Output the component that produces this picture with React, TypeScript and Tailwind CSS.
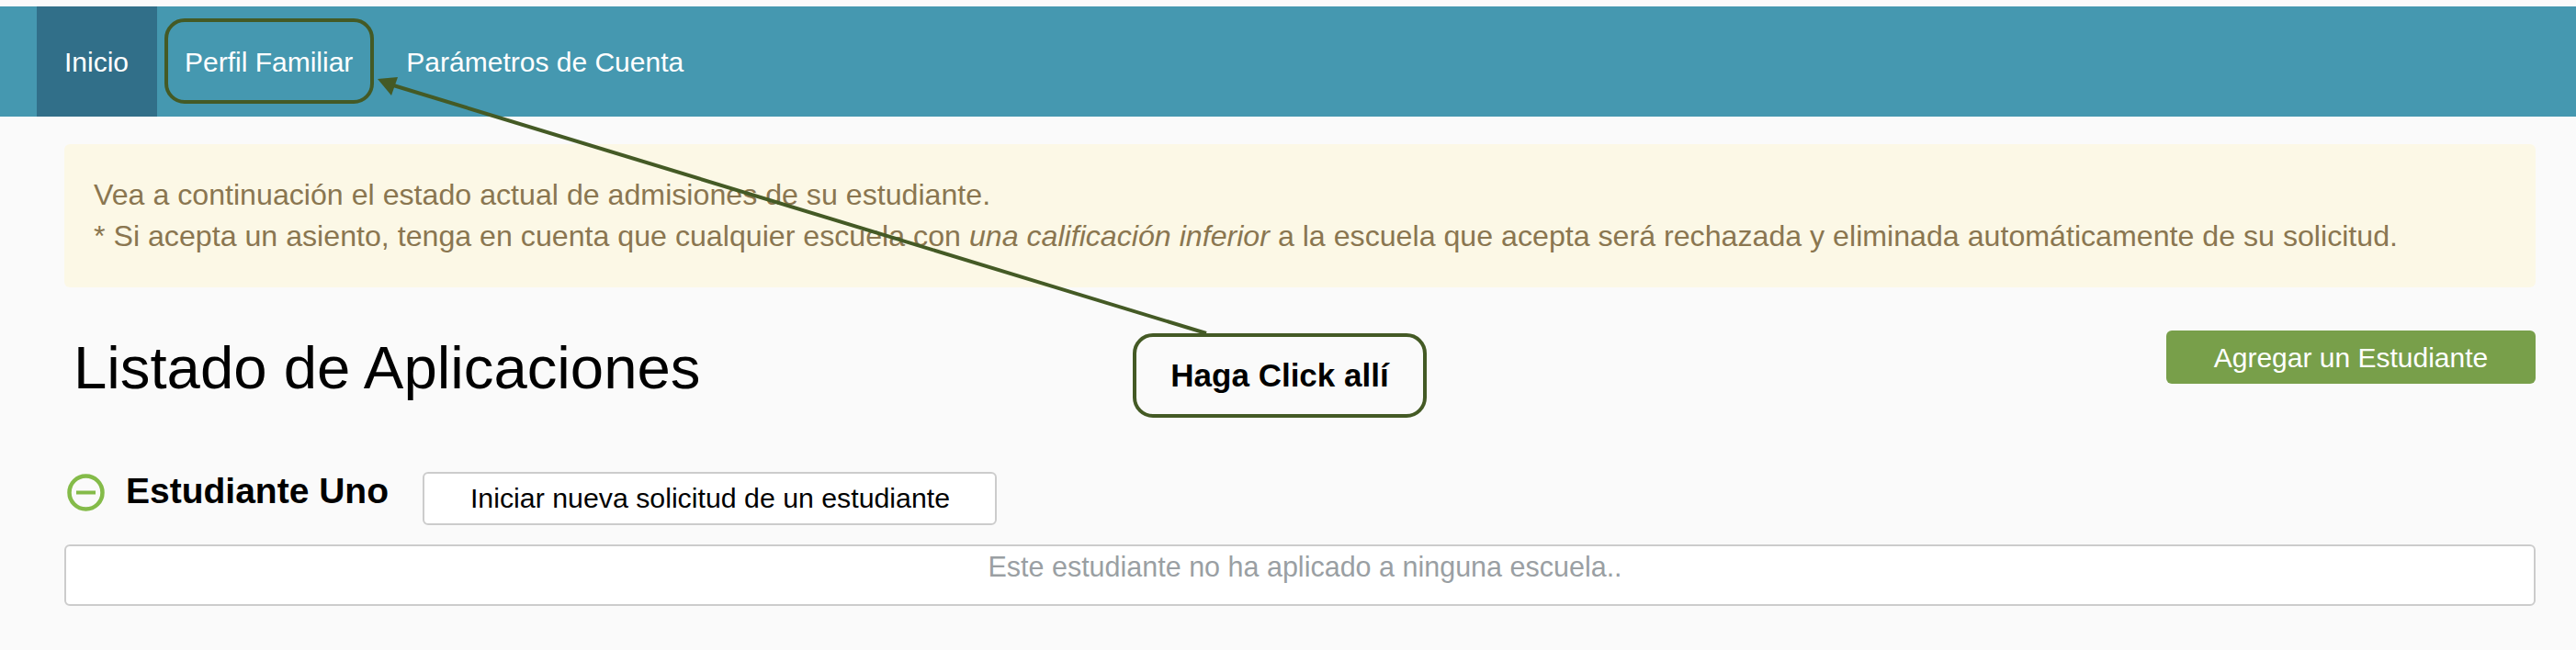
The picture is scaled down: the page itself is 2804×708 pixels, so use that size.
const NAV_LINKS = ["Perfil Familiar", "Parámetros de Cuenta"];

export default function App() {
  return (
    <div className="relative h-[708px] w-[2804px] overflow-hidden bg-[#fafafa] pt-[7px] font-['Liberation_Sans',Arial,sans-serif]">
      <nav className="flex h-[120px] items-center bg-[#4598b0] pl-[40px] text-[30px] text-white">
        <a className="flex h-full w-[131px] items-center justify-center bg-[#316f89] pr-[1px]">Inicio</a>
        <a className="flex h-full items-center pl-[30px] pr-[28px]">{NAV_LINKS[0]}</a>
        <a className="flex h-full items-center px-[30px]">{NAV_LINKS[1]}</a>
      </nav>

      <main className="pl-[70px] pr-[44px]">
        <div className="mt-[30px] h-[156px] rounded-[6px] bg-[#fcf8e6] px-[32px] pt-[33px] text-[32.16px] leading-[45px] text-[#8a7650]">
          <p>Vea a continuación el estado actual de admisiones de su estudiante.</p>
          <p>
            * Si acepta un asiento, tenga en cuenta que cualquier escuela con <em>una calificación inferior</em> a la
            escuela que acepta será rechazada y eliminada automáticamente de su solicitud.
          </p>
        </div>

        <div className="flex h-[201px] items-start justify-between">
          <h1 className="ml-[10px] mt-[48px] text-[65.3px] leading-[80px] text-black">Listado de Aplicaciones</h1>
          <button className="mt-[47px] flex h-[58px] w-[402px] items-center justify-center rounded-[6px] bg-[#789f4a] text-[30px] text-white">
            Agregar un Estudiante
          </button>
        </div>

        <div className="flex h-[79px] items-start">
          <svg className="ml-[3px] mt-[2px] h-[41px] w-[41px]" viewBox="0 0 41 41" fill="none" stroke="#84bb49">
            <circle cx="20.5" cy="20.5" r="18" strokeWidth="4.5" />
            <path d="M10 20.5h21" strokeWidth="4" />
          </svg>
          <h2 className="ml-[23px] text-[39px] font-bold leading-[42px] text-black">Estudiante Uno</h2>
          <button className="ml-[37px] flex h-[58px] w-[625px] items-center justify-center rounded-[6px] border-2 border-[#cccccc] bg-white pl-[1px] text-[30.3px] text-black">
            Iniciar nueva solicitud de un estudiante
          </button>
        </div>

        <div className="h-[67px] rounded-[6px] border-2 border-[#cccccc] bg-white pl-[11px] text-center text-[30.5px] leading-[44px] text-[#9a9fa3]">
          Este estudiante no ha aplicado a ninguna escuela..
        </div>
      </main>

      {/* annotations drawn over the page */}
      <div className="absolute left-[179px] top-[20px] h-[93px] w-[228px] rounded-[22px] border-[4px] border-[#445a25]" />
      <svg className="absolute left-0 top-0 h-[708px] w-[2804px]" viewBox="0 0 2804 708" fill="none">
        <path d="M425 92L1313 363" stroke="#445a25" strokeWidth="4" />
        <path d="M411 86L433 84L426 104Z" fill="#445a25" />
      </svg>
      <div className="absolute left-[1233px] top-[363px] flex h-[92px] w-[320px] items-center justify-center rounded-[22px] border-[4px] border-[#445a25] bg-[#fafafa] text-[35px] font-bold text-black">
        Haga Click allí
      </div>
    </div>
  );
}
